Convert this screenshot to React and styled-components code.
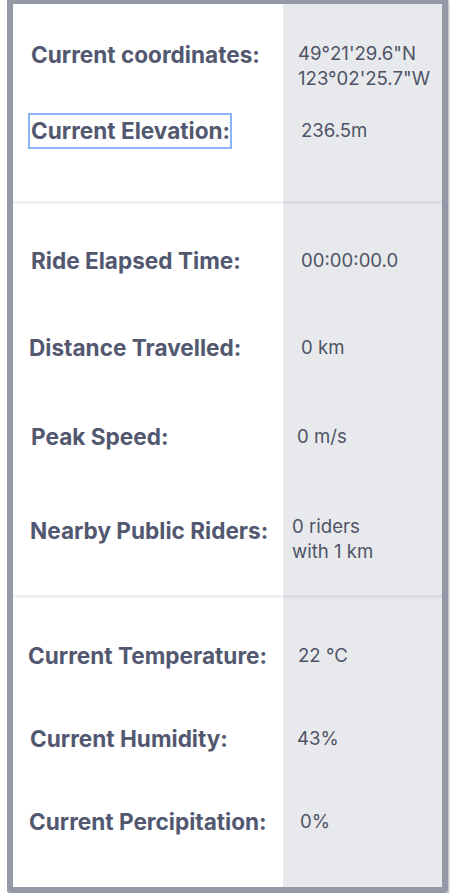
import React from "react";
import styled, { createGlobalStyle } from "styled-components";

const Global = createGlobalStyle`
  html, body { margin: 0; padding: 0; background: #ffffff; }
  body { font-family: Inter, "Noto Sans", "Liberation Sans", sans-serif; }
`;

const Card = styled.div`
  box-sizing: border-box;
  width: 441px;
  height: 895px;
  margin: -2px 0 0 7px;
  border: 6px solid #9599a7;
  border-radius: 3px;
  box-shadow: 1.5px 1.5px 0 #c8cbd3;
  background: linear-gradient(to right, #ffffff 270px, #e8e9ed 270px);
  display: flex;
  flex-direction: column;
  overflow: hidden;
`;

const Section = styled.section`
  box-sizing: border-box;
  height: ${(p) => p.$h}px;
  padding-top: ${(p) => p.$pt}px;
  display: flex;
  flex-direction: column;
`;

const Divider = styled.div`
  height: 3px;
  flex: none;
  background: rgba(60, 66, 90, 0.075);
`;

const Row = styled.div`
  display: grid;
  grid-template-columns: 270px 1fr;
  align-items: start;
  height: ${(p) => (p.$h ? `${p.$h}px` : "auto")};
  flex: none;
`;

const Label = styled.div`
  padding-left: ${(p) => 17 + (p.$dx || 0)}px;
  font-size: 22.6px;
  line-height: 25px;
  font-weight: 700;
  color: #525870;
  white-space: nowrap;
  letter-spacing: 0;
`;

const Focused = styled.span`
  display: inline-block;
  border: 2px solid #8ab4f6;
  padding: 3px 0 4px 1px;
  margin: -5px 0 -6px -3px;
`;

const Value = styled.div`
  padding-left: ${(p) => 17 + (p.$dx || 0)}px;
  margin-top: ${(p) => p.$dy || 0}px;
  font-size: 18.6px;
  line-height: 25px;
  font-weight: 400;
  color: #4e5466;
  white-space: nowrap;
`;

const Line = styled.div``;

export default function App() {
  return (
    <>
      <Global />
      <Card>
        <Section $h={197} $pt={38}>
          <Row $h={76}>
            <Label $dx={1}>Current coordinates:</Label>
            <Value $dx={-2} $dy={-1}>
              <Line>49°21'29.6"N</Line>
              <Line>123°02'25.7"W</Line>
            </Value>
          </Row>
          <Row>
            <Label $dx={1}>
              <Focused>Current Elevation:</Focused>
            </Label>
            <Value $dx={1}>236.5m</Value>
          </Row>
        </Section>
        <Divider />
        <Section $h={391} $pt={44}>
          <Row $h={87}>
            <Label $dx={1}>Ride Elapsed Time:</Label>
            <Value $dx={1}>00:00:00.0</Value>
          </Row>
          <Row $h={89}>
            <Label $dx={-1}>Distance Travelled:</Label>
            <Value $dx={1}>0 km</Value>
          </Row>
          <Row $h={94}>
            <Label $dx={1}>Peak Speed:</Label>
            <Value $dx={-3}>0 m/s</Value>
          </Row>
          <Row>
            <Label>Nearby Public Riders:</Label>
            <Value $dx={-8} $dy={-4}>
              <Line>0 riders</Line>
              <Line>with 1 km</Line>
            </Value>
          </Row>
        </Section>
        <Divider />
        <Section $h={289} $pt={45}>
          <Row $h={83}>
            <Label $dx={-2}>Current Temperature:</Label>
            <Value $dx={-2}>22 °C</Value>
          </Row>
          <Row $h={83}>
            <Label>Current Humidity:</Label>
            <Value $dx={-3}>43%</Value>
          </Row>
          <Row>
            <Label $dx={-1}>Current Percipitation:</Label>
            <Value>0%</Value>
          </Row>
        </Section>
      </Card>
    </>
  );
}
